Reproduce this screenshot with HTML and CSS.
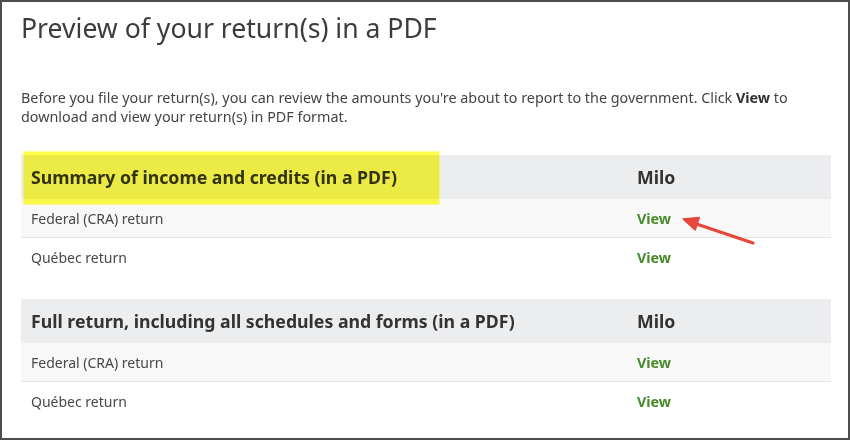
FILE: index.html
```html
<!DOCTYPE html>
<html lang="en">
<head>
<meta charset="utf-8">
<title>Preview of your return(s) in a PDF</title>
<link rel="stylesheet" href="styles.css">
</head>
<body>
<div class="frame">
  <h1 class="title">Preview of your return(s) in a PDF</h1>
  <p class="intro">Before you file your return(s), you can review the amounts you're about to report to the government. Click <strong>View</strong> to download and view your return(s) in PDF format.</p>

  <div class="table first">
    <div class="row head">
      <div class="cell">Summary of income and credits (in a PDF)</div>
      <div class="cell">Milo</div>
    </div>
    <div class="row alt">
      <div class="cell">Federal (CRA) return</div>
      <div class="cell"><a class="view" href="#">View</a></div>
    </div>
    <div class="row">
      <div class="cell">Québec return</div>
      <div class="cell"><a class="view" href="#">View</a></div>
    </div>
    <div class="highlight"></div>
    <svg class="arrow" width="90" height="40" viewBox="0 0 90 40">
      <line x1="74" y1="33" x2="16" y2="13.5" stroke="#e5473b" stroke-width="3.2" stroke-linecap="round"/>
      <polygon points="4,9 20.3,7.6 16.2,19.9" fill="#e5473b" stroke="#e5473b" stroke-width="1.5" stroke-linejoin="round"/>
    </svg>
  </div>

  <div class="table second">
    <div class="row head">
      <div class="cell">Full return, including all schedules and forms (in a PDF)</div>
      <div class="cell">Milo</div>
    </div>
    <div class="row alt">
      <div class="cell">Federal (CRA) return</div>
      <div class="cell"><a class="view" href="#">View</a></div>
    </div>
    <div class="row">
      <div class="cell">Québec return</div>
      <div class="cell"><a class="view" href="#">View</a></div>
    </div>
  </div>
</div>
</body>
</html>
```

FILE: styles.css
```css
html, body {
  margin: 0;
  padding: 0;
  background: #ffffff;
}

body {
  font-family: "Noto Sans", "Open Sans", sans-serif;
  color: #3a3a3a;
}

.frame {
  box-sizing: border-box;
  width: 850px;
  height: 440px;
  border: 2px solid #4d4d4d;
  padding: 8px 17px 0 19px;
  overflow: hidden;
}

.title {
  margin: 0;
  font-size: 26.6px;
  line-height: 36px;
  font-weight: 400;
  color: #3c3c3c;
}

.intro {
  margin: 42px 0 0 0;
  font-size: 14.35px;
  line-height: 19px;
  color: #444444;
}

.intro strong {
  color: #333333;
}

.table {
  position: relative;
  width: 810px;
  margin-top: 29px;
}

.table.second {
  margin-top: 22px;
}

.row {
  display: grid;
  grid-template-columns: 606px 1fr;
  height: 39px;
  align-items: center;
  font-size: 14px;
  color: #474747;
}

.row .cell {
  padding-left: 10px;
}

.row.head {
  height: 44px;
  background: #ecedef;
  font-size: 17.7px;
  font-weight: 700;
  color: #333333;
}

.row.alt {
  background: #f8f8f8;
  border-bottom: 1px solid #e6e6e6;
  height: 38px;
}

.view {
  color: #478a2b;
  font-size: 14.3px;
  font-weight: 700;
  text-decoration: none;
}

.highlight {
  position: absolute;
  left: 3px;
  top: -3px;
  width: 415px;
  height: 52px;
  background: #fffd4a;
  box-shadow: 0 0 1px 1px rgba(255, 253, 74, 0.5);
  mix-blend-mode: multiply;
  pointer-events: none;
}

.arrow {
  position: absolute;
  left: 658px;
  top: 55px;
}
```
